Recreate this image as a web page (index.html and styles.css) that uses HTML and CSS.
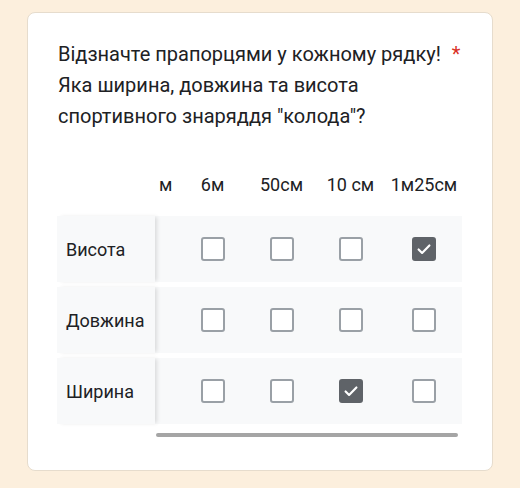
FILE: index.html
```html
<!DOCTYPE html>
<html lang="uk">
<head>
<meta charset="utf-8">
<link rel="stylesheet" href="styles.css">
</head>
<body>
<div class="card">
  <div class="title">Відзначте прапорцями у кожному рядку! <span class="req">*</span><br>Яка ширина, довжина та висота<br>спортивного знаряддя "колода"?</div>
  <div class="grid">
    <div class="hrow">
      <div class="lab-spacer"></div>
      <div class="cols">
        <div class="col col0">м</div>
        <div class="col">6м</div>
        <div class="col">50см</div>
        <div class="col">10 см</div>
        <div class="col wide">1м25см</div>
      </div>
    </div>
    <div class="row">
      <div class="lab">Висота</div>
      <div class="cols">
        <div class="col col0"></div>
        <div class="col"><span class="cb"></span></div>
        <div class="col"><span class="cb"></span></div>
        <div class="col"><span class="cb"></span></div>
        <div class="col wide"><span class="cb on"><svg viewBox="0 0 24 24"><path d="M5.5 12.5l4.2 4.2 8.8-9" fill="none" stroke="#fff" stroke-width="2.6" stroke-linecap="round" stroke-linejoin="round"/></svg></span></div>
      </div>
    </div>
    <div class="row">
      <div class="lab">Довжина</div>
      <div class="cols">
        <div class="col col0"></div>
        <div class="col"><span class="cb"></span></div>
        <div class="col"><span class="cb"></span></div>
        <div class="col"><span class="cb"></span></div>
        <div class="col wide"><span class="cb"></span></div>
      </div>
    </div>
    <div class="row">
      <div class="lab">Ширина</div>
      <div class="cols">
        <div class="col col0"></div>
        <div class="col"><span class="cb"></span></div>
        <div class="col"><span class="cb"></span></div>
        <div class="col"><span class="cb on"><svg viewBox="0 0 24 24"><path d="M5.5 12.5l4.2 4.2 8.8-9" fill="none" stroke="#fff" stroke-width="2.6" stroke-linecap="round" stroke-linejoin="round"/></svg></span></div>
        <div class="col wide"><span class="cb"></span></div>
      </div>
    </div>
    <div class="sbar-wrap"><div class="sbar"></div></div>
  </div>
</div>
</body>
</html>
```
FILE: styles.css
```css
html, body {
  margin: 0;
  padding: 0;
  background: #fcefdd;
  font-family: Roboto, "Noto Sans", sans-serif;
  color: #202124;
}
.card {
  margin: 12px 27px 0 27px;
  width: 464px;
  height: 457px;
  background: #fff;
  border: 1px solid #e6dccd;
  border-radius: 8px;
  box-sizing: content-box;
}
.title {
  padding: 26px 0 0 30px;
  font-size: 20px;
  line-height: 31px;
}
.req {
  color: #d93025;
  margin-left: 6px;
}
.grid {
  margin: 38px 0 0 29px;
  width: 405px;
}
.hrow {
  display: flex;
  height: 28px;
  align-items: center;
  margin-bottom: 18px;
  font-size: 18px;
}
.lab-spacer {
  width: 98px;
  flex: none;
}
.cols {
  display: flex;
  flex: 1;
  overflow: hidden;
  height: 100%;
}
.col {
  width: 69px;
  flex: none;
  display: flex;
  align-items: center;
  justify-content: center;
}
.col.wide {
  width: 78px;
}
.col.col0 {
  width: 23px;
  justify-content: flex-start;
  padding-left: 4px;
  box-sizing: border-box;
}
.row {
  display: flex;
  height: 66px;
  background: #f8f9fa;
  margin-bottom: 5px;
  font-size: 18px;
}
.lab {
  width: 98px;
  flex: none;
  display: flex;
  align-items: center;
  padding-left: 9px;
  box-sizing: border-box;
  background: #f8f9fa;
  box-shadow: 3px 0 4px -1px rgba(0,0,0,0.12);
  position: relative;
  z-index: 1;
}
.cb {
  width: 20px;
  height: 20px;
  border: 2px solid #9aa0a6;
  border-radius: 3px;
  background: #fff;
  display: block;
}
.cb.on {
  background: #5f6368;
  border-color: #5f6368;
}
.cb svg {
  display: block;
  width: 20px;
  height: 20px;
}
.sbar-wrap {
  padding-left: 99px;
  margin-top: 9px;
}
.sbar {
  width: 302px;
  height: 4px;
  border-radius: 2px;
  background: #a5a5a5;
}
```
